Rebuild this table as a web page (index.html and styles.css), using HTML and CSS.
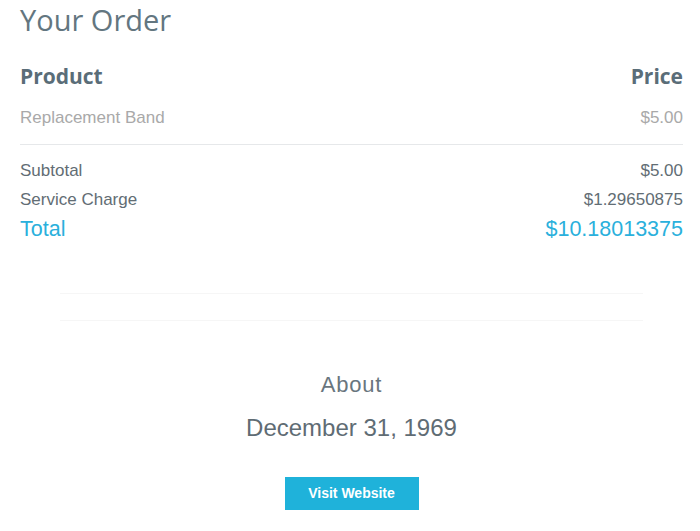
FILE: index.html
```html
<!DOCTYPE html>
<html>
<head>
<meta charset="utf-8">
<link rel="stylesheet" href="styles.css">
</head>
<body>
<div class="page">
  <h1 class="title">Your Order</h1>
  <div class="row head">
    <span>Product</span><span>Price</span>
  </div>
  <div class="row item">
    <span>Replacement Band</span><span>$5.00</span>
  </div>
  <div class="divider"></div>
  <div class="row sum">
    <span>Subtotal</span><span>$5.00</span>
  </div>
  <div class="row sum">
    <span>Service Charge</span><span>$1.29650875</span>
  </div>
  <div class="row total">
    <span>Total</span><span>$10.18013375</span>
  </div>
  <div class="faint first"></div>
  <div class="faint second"></div>
  <div class="about">
    <div class="about-label">About</div>
    <div class="about-date">December 31, 1969</div>
    <a class="btn" href="#">Visit Website</a>
  </div>
</div>
</body>
</html>
```

FILE: styles.css
```css
* { box-sizing: border-box; }
html, body { margin: 0; padding: 0; background: #fff; }
body { font-family: "Liberation Sans", Arial, sans-serif; color: #5d6a72; }
.page { padding: 0 17px 0 20px; width: 700px; }
.title {
  margin: 0;
  font-family: "Open Sans", sans-serif;
  font-weight: 400;
  font-size: 29px;
  line-height: 40px;
  color: #637680;
}
.row { display: flex; justify-content: space-between; align-items: center; }
.head {
  margin-top: 22px;
  font-family: "Open Sans", sans-serif;
  font-weight: 700;
  font-size: 21px;
  line-height: 28px;
  color: #5a6d78;
}
.item {
  margin-top: 18px;
  font-size: 17px;
  line-height: 20px;
  color: #a9a9a9;
}
.divider { height: 1px; background: #e6e8ea; margin-top: 16px; }
.sum {
  font-size: 17px;
  line-height: 29px;
  color: #626d74;
}
.divider + .sum { margin-top: 11px; }
.total {
  font-size: 21.5px;
  line-height: 31px;
  color: #2ab0dc;
}
.faint { height: 1px; margin: 0 40px; background: #f6f6f6; }
.faint.first { margin-top: 48px; }
.faint.second { margin-top: 26px; }
.about { display: flex; flex-direction: column; align-items: center; }
.about-label {
  margin-top: 52px;
  font-size: 22px;
  letter-spacing: 0.8px;
  line-height: 24px;
  color: #69767e;
}
.about-date {
  margin-top: 17px;
  font-size: 24px;
  line-height: 28px;
  color: #5f6c74;
}
.btn {
  margin-top: 35px;
  display: block;
  width: 134px;
  height: 33px;
  line-height: 33px;
  text-align: center;
  background: #1fb2da;
  color: #fff;
  font-weight: 700;
  font-size: 14px;
  text-decoration: none;
}
```
